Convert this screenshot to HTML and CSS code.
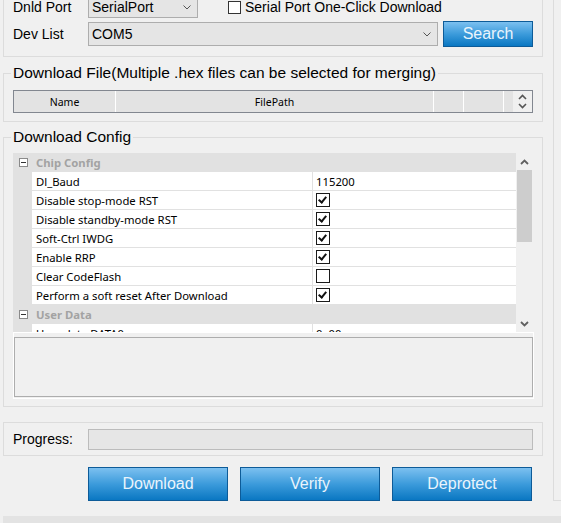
FILE: index.html
```html
<!DOCTYPE html>
<html>
<head>
<meta charset="utf-8">
<link rel="stylesheet" href="styles.css">
</head>
<body>
<div class="screen">
  <div class="window">
    <div class="main">
      <div class="group top">
        <div class="row r1">
          <span class="lbl">Dnld Port</span>
          <div class="combo port"><span>SerialPort</span><svg class="chev" width="8" height="5" viewBox="0 0 8 5"><polyline points="0.5,0.5 4,4 7.5,0.5" fill="none" stroke="#555" stroke-width="1"/></svg></div>
          <div class="chk"><span class="cbox"></span><span>Serial Port One-Click Download</span></div>
        </div>
        <div class="row r2">
          <span class="lbl">Dev List</span>
          <div class="combo dev"><span>COM5</span><svg class="chev" width="8" height="5" viewBox="0 0 8 5"><polyline points="0.5,0.5 4,4 7.5,0.5" fill="none" stroke="#555" stroke-width="1"/></svg></div>
          <button class="btn search">Search</button>
        </div>
      </div>

      <fieldset class="group file">
        <legend>Download File(Multiple .hex files can be selected for merging)</legend>
        <div class="listhdr">
          <div class="hc c1">Name</div>
          <div class="hc c2">FilePath</div>
          <div class="hc c3"></div>
          <div class="hc c4"></div>
          <div class="hc c5"></div>
          <div class="spin">
            <svg width="9" height="6" viewBox="0 0 9 6"><polyline points="1,5 4.5,1.5 8,5" fill="none" stroke="#555" stroke-width="1.6"/></svg>
            <svg width="9" height="6" viewBox="0 0 9 6"><polyline points="1,1 4.5,4.5 8,1" fill="none" stroke="#555" stroke-width="1.6"/></svg>
          </div>
        </div>
      </fieldset>

      <fieldset class="group cfg">
        <legend>Download Config</legend>
        <div class="pgrid">
          <div class="pg-rows">
            <div class="pr cat"><span class="gut"><svg width="9" height="9" viewBox="0 0 9 9"><rect x="0.5" y="0.5" width="8" height="8" fill="#fff" stroke="#8a8a8a"/><line x1="2" y1="4.5" x2="7" y2="4.5" stroke="#333"/></svg></span><span class="cname">Chip Config</span></div>
            <div class="pr"><span class="gut"></span><span class="pn">Dl_Baud</span><span class="pv">115200</span></div>
            <div class="pr"><span class="gut"></span><span class="pn">Disable stop-mode RST</span><span class="pv"><span class="gbox on"></span></span></div>
            <div class="pr"><span class="gut"></span><span class="pn">Disable standby-mode RST</span><span class="pv"><span class="gbox on"></span></span></div>
            <div class="pr"><span class="gut"></span><span class="pn">Soft-Ctrl IWDG</span><span class="pv"><span class="gbox on"></span></span></div>
            <div class="pr"><span class="gut"></span><span class="pn">Enable RRP</span><span class="pv"><span class="gbox on"></span></span></div>
            <div class="pr"><span class="gut"></span><span class="pn">Clear CodeFlash</span><span class="pv"><span class="gbox"></span></span></div>
            <div class="pr"><span class="gut"></span><span class="pn">Perform a soft reset After Download</span><span class="pv"><span class="gbox on"></span></span></div>
            <div class="pr cat"><span class="gut"><svg width="9" height="9" viewBox="0 0 9 9"><rect x="0.5" y="0.5" width="8" height="8" fill="#fff" stroke="#8a8a8a"/><line x1="2" y1="4.5" x2="7" y2="4.5" stroke="#333"/></svg></span><span class="cname">User Data</span></div>
            <div class="pr"><span class="gut"></span><span class="pn">User data DATA0</span><span class="pv">0x00</span></div>
          </div>
          <div class="pg-scroll">
            <div class="sb-btn"><svg width="9" height="6" viewBox="0 0 9 6"><polyline points="1,5 4.5,1.5 8,5" fill="none" stroke="#606060" stroke-width="1.8"/></svg></div>
            <div class="sb-track"><div class="sb-thumb"></div></div>
            <div class="sb-btn"><svg width="9" height="6" viewBox="0 0 9 6"><polyline points="1,1 4.5,4.5 8,1" fill="none" stroke="#606060" stroke-width="1.8"/></svg></div>
          </div>
        </div>
        <div class="help"><div class="help-in"></div></div>
      </fieldset>

      <div class="group progress">
        <span class="lbl">Progress:</span>
        <div class="pbar"></div>
      </div>

      <div class="actions">
        <button class="btn big">Download</button>
        <button class="btn big">Verify</button>
        <button class="btn big">Deprotect</button>
      </div>
    </div>
    <div class="side"></div>
  </div>
  <div class="status"></div>
</div>
</body>
</html>
```

FILE: styles.css
```css
* { box-sizing: border-box; }
html, body { margin: 0; padding: 0; }
body {
  background: #f0f0f0;
  font-family: "Liberation Sans", Arial, sans-serif;
  font-size: 14px;
  color: #000;
  width: 561px;
  height: 523px;
  overflow: hidden;
}
.screen { width: 561px; height: 523px; display: flex; flex-direction: column; }
.window { height: 516px; display: flex; }
.main { padding-left: 3px; width: 543px; flex: none; }
.side {
  margin-left: 10px;
  flex: 1;
  height: 501px;
  border-left: 1px solid #dcdcdc;
  border-bottom: 1px solid #dcdcdc;
}
.status { height: 7px; margin-left: 3px; background: #e3e3e3; }

.group {
  width: 540px;
  border: 1px solid #dcdcdc;
  margin: 0;
  min-width: 0;
}
.top { border-top: none; padding: 0 0 9px 9px; }
.row { display: flex; align-items: center; }
.r1 { margin-top: -4px; height: 22px; }
.r2 { margin-top: 3px; height: 26px; }
.lbl { width: 75px; flex: none; white-space: nowrap; }

.combo {
  display: flex;
  align-items: center;
  justify-content: space-between;
  background: #e5e5e5;
  border: 1px solid #adadad;
  padding: 0 6px 0 3px;
  flex: none;
}
.combo.port { width: 110px; height: 22px; }
.combo.dev { width: 350px; height: 24px; }
.chk { display: flex; align-items: center; margin-left: 30px; }
.cbox {
  width: 13px; height: 13px;
  border: 1px solid #333;
  background: #fff;
  margin-right: 4px;
  flex: none;
}

.btn {
  font-family: "Liberation Sans", Arial, sans-serif;
  font-size: 16px;
  color: #eaf4fc;
  border: 1px solid #0d5b98;
  background: linear-gradient(#7cc0f0, #3c9bdb 50%, #0a77c2);
  padding: 0;
  margin: 0;
}
.search { width: 90px; height: 26px; margin-left: 5px; }

fieldset.group { padding-left: 9px; padding-right: 9px; }
legend {
  font-size: 15.5px;
  line-height: 18px;
  padding: 0 2px;
  margin-left: -2px;
  white-space: nowrap;
}
fieldset.file { margin-top: 7px; padding-top: 8px; padding-bottom: 8px; }
.listhdr {
  width: 520px;
  height: 23px;
  border: 1px solid #828790;
  display: flex;
  background: #e3e3e3;
  font-family: "Noto Sans", "Liberation Sans", sans-serif;
  font-size: 10.5px;
}
.hc {
  border-right: 1px solid #fff;
  display: flex;
  align-items: center;
  justify-content: center;
  height: 21px;
}
.c1 { width: 102px; }
.c2 { width: 318px; }
.c3 { width: 30px; }
.c4 { width: 40px; }
.c5 { width: 9px; border-right: none; }
.spin {
  flex: 1;
  background: #f0f0f0;
  display: flex;
  flex-direction: column;
  align-items: center;
  justify-content: center;
  gap: 3px;
}

fieldset.cfg { margin-top: 6px; padding-top: 7px; padding-bottom: 7px; }
.pgrid { width: 520px; height: 179px; display: flex; }
.pg-rows {
  width: 503px;
  overflow: hidden;
  font-family: "Noto Sans", "Liberation Sans", sans-serif;
  font-size: 11.3px;
}
.pr {
  display: flex;
  height: 19px;
  border-bottom: 1px solid #e1e1e1;
  background: #fff;
}
.gut {
  width: 19px;
  flex: none;
  background: #e1e1e1;
  display: flex;
  align-items: center;
  padding-left: 6px;
}
.pn {
  width: 280px;
  flex: none;
  padding-left: 4px;
  display: flex;
  align-items: center;
  white-space: nowrap;
}
.pv {
  flex: 1;
  border-left: 1px solid #e1e1e1;
  padding-left: 3px;
  display: flex;
  align-items: center;
}
.pr.cat { background: #e1e1e1; }
.cname {
  padding-left: 4px;
  font-weight: bold;
  color: #a3a3a3;
  display: flex;
  align-items: center;
}
.gbox {
  width: 14px; height: 14px;
  border: 1px solid #1a1a1a;
  background: #fff;
  position: relative;
}
.gbox.on::after {
  content: "";
  position: absolute;
  left: 3px; top: 1px;
  width: 3px; height: 6px;
  border-right: 2px solid #111;
  border-bottom: 2px solid #111;
  transform: rotate(40deg);
}
.pg-scroll {
  width: 17px;
  background: #f0f0f0;
  display: flex;
  flex-direction: column;
}
.sb-btn { height: 17px; display: flex; align-items: center; justify-content: center; }
.sb-track { flex: 1; padding-left: 1px; }
.sb-thumb { width: 15px; height: 72px; background: #cdcdcd; }

.help {
  width: 521px;
  height: 67px;
  border: 1px solid #fff;
  padding: 4px 0 1px 0;
}
.help-in { height: 100%; border: 1px solid #adadad; background: #f0f0f0; }

.progress {
  margin-top: 15px;
  height: 34px;
  padding-left: 9px;
  display: flex;
  align-items: center;
}
.pbar {
  width: 445px;
  height: 21px;
  background: #e6e6e6;
  border: 1px solid #bcbcbc;
}
.actions {
  margin-top: 11px;
  padding-left: 85px;
  display: flex;
  gap: 12px;
}
.big { width: 140px; height: 34px; }
```
